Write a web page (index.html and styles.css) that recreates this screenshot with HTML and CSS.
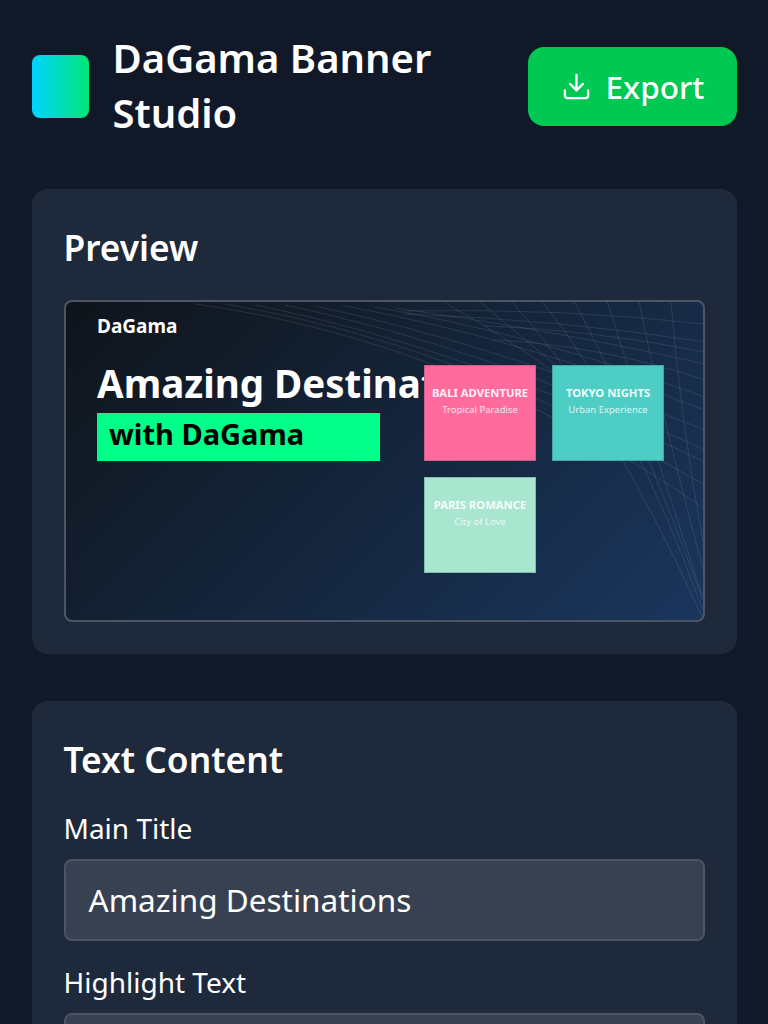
FILE: index.html
```html
<!DOCTYPE html>
<html lang="en">
<head>
<meta charset="utf-8">
<title>DaGama Banner Studio</title>
<link rel="stylesheet" href="styles.css">
</head>
<body>
<div class="app">
  <header class="top">
    <div class="brand">
      <div class="logo"></div>
      <h1 class="app-title">DaGama Banner Studio</h1>
    </div>
    <button class="export">
      <svg class="export-icon" viewBox="0 0 24 24" fill="none" stroke="currentColor" stroke-width="1.8" stroke-linecap="round" stroke-linejoin="round"><path d="M21 15v4a2 2 0 0 1-2 2H5a2 2 0 0 1-2-2v-4"/><path d="M7 10l5 5 5-5"/><path d="M12 15V3"/></svg>
      <span>Export</span>
    </button>
  </header>

  <section class="card">
    <h2 class="card-title">Preview</h2>
    <div class="banner">
      <svg class="mesh" viewBox="0 0 640 320" fill="none" stroke="#ffffff" stroke-opacity="0.1" stroke-width="1">
        <path d="M130 2 Q400 40 640 207"/><path d="M160 2 Q400 42 640 183"/>
        <path d="M190 3 Q400 45 640 160"/><path d="M220 3 Q420 45 640 148"/>
        <path d="M250 4 Q430 42 640 128"/><path d="M280 4 Q450 35 640 108"/>
        <path d="M310 5 Q470 32 640 95"/><path d="M330 6 Q500 30 640 62"/>
        <path d="M340 12 Q500 18 640 40"/><path d="M340 9 Q500 6 640 22"/>
        <path d="M420 24 Q530 28 640 50"/><path d="M430 38 Q540 44 640 78"/>
        <path d="M608 0 Q618 120 640 240"/><path d="M576 0 Q600 120 640 267"/>
        <path d="M544 0 Q585 130 640 297"/><path d="M511 0 Q575 120 640 300"/>
        <path d="M479 0 Q570 115 640 310"/><path d="M448 0 Q540 100 640 318"/>
        <path d="M416 0 Q500 70 570 130"/><path d="M379 0 Q460 45 530 100"/>
      </svg>
      <div class="banner-main">
        <div class="banner-brand">DaGama</div>
        <div class="banner-title">Amazing Destinations</div>
        <div class="banner-highlight">with DaGama</div>
      </div>
      <div class="tiles">
        <div class="tile tile-pink"><strong>BALI ADVENTURE</strong><span>Tropical Paradise</span></div>
        <div class="tile tile-teal"><strong>TOKYO NIGHTS</strong><span>Urban Experience</span></div>
        <div class="tile tile-mint"><strong>PARIS ROMANCE</strong><span>City of Love</span></div>
      </div>
    </div>
  </section>

  <section class="card">
    <h2 class="card-title">Text Content</h2>
    <label class="field">
      <span class="field-label">Main Title</span>
      <span class="input">Amazing Destinations</span>
    </label>
    <label class="field">
      <span class="field-label">Highlight Text</span>
      <span class="input">with DaGama</span>
    </label>
  </section>
</div>
</body>
</html>
```
FILE: styles.css
```css
* { box-sizing: border-box; }
html, body { margin: 0; height: 1024px; overflow: hidden; }
body { background: #111827; color: #fff; font-family: "Noto Sans", sans-serif; }
.app { padding: 31px 31px 0 31.5px; display: flex; flex-direction: column; gap: 47px; }
.top { display: flex; align-items: center; justify-content: space-between; height: 111px; }
.brand { display: flex; align-items: center; gap: 24px; }
.logo { width: 57px; height: 63px; border-radius: 8px; background: linear-gradient(90deg, #00d4ff, #00e676); }
.app-title { margin: 0; width: 340px; padding-bottom: 4px; font-size: 40px; line-height: 55px; font-weight: 600; }
.export { display: flex; align-items: center; justify-content: center; gap: 14px; width: 209px; height: 79px; border: 0; border-radius: 16px; background: #00c853; color: #fff; font-family: inherit; font-size: 31.5px; font-weight: 500; padding: 0; }
.export-icon { width: 31px; height: 31px; }
.card { background: #1e293b; border-radius: 16px; padding: 32px; }
.card-title { margin: 0 0 24px; font-size: 35.3px; line-height: 52px; font-weight: 600; }
.banner { position: relative; display: flex; height: 322px; margin-top: 27px; padding: 14px 31.5px; overflow: hidden; border: 2px solid #4b5563; border-radius: 8px; background: linear-gradient(135deg, #0f141a, #1a365d); }
.mesh { position: absolute; inset: 0; width: 100%; height: 100%; }
.banner-main { position: relative; width: 327px; flex: none; }
.banner-brand { font-size: 19px; line-height: 20px; font-weight: 700; }
.banner-title { margin-top: 25px; font-size: 38.5px; line-height: 45px; font-weight: 700; white-space: nowrap; }
.banner-highlight { width: 283px; height: 48px; margin-top: 7px; padding: 0 12px; background: #00ff88; color: #000; font-size: 29px; line-height: 42px; font-weight: 700; }
.tiles { position: relative; display: grid; grid-template-columns: repeat(2, 112px); grid-auto-rows: 96px; gap: 16px; margin-top: 49px; }
.tile { display: flex; flex-direction: column; align-items: center; padding-top: 18px; text-align: center; border: 1px solid rgba(30,60,80,.25); color: #fff; }
.tile strong { font-size: 11.25px; line-height: 18px; font-weight: 700; white-space: nowrap; opacity: .9; }
.tile span { font-size: 9.5px; line-height: 16px; opacity: .8; white-space: nowrap; }
.tile-pink { background: #ff6b9d; }
.tile-teal { background: #4ecdc4; }
.tile-mint { background: #a8e6cf; }
.field { display: block; }
.field + .field { margin-top: 22px; }
.field-label { display: block; margin-bottom: 12px; font-size: 28px; line-height: 38px; }
.input { display: block; height: 82px; padding: 0 23px; border: 2px solid #4b5563; border-radius: 8px; background: #374151; font-size: 31.5px; line-height: 78px; }
```
